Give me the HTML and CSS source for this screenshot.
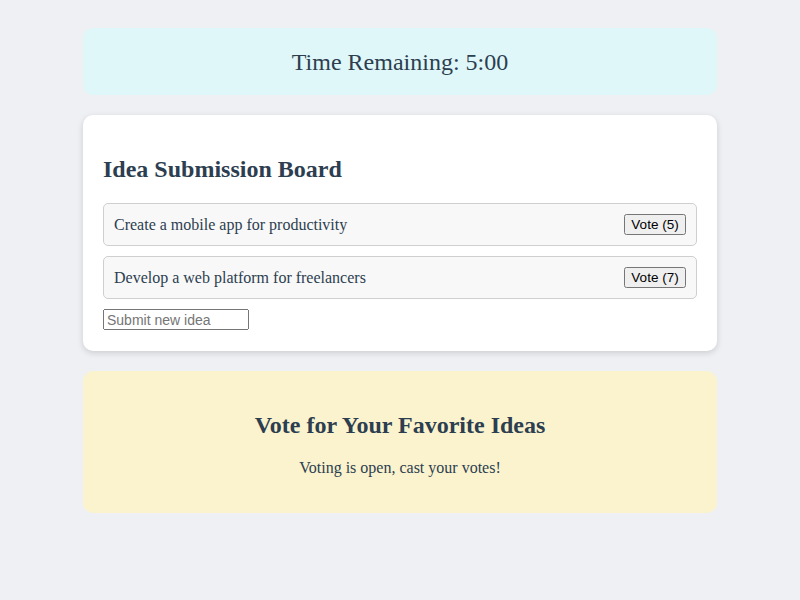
FILE: index.html
```html
<!DOCTYPE html>
<html>
<head>
<meta charset="utf-8">
<link rel="stylesheet" href="styles.css">
</head>
<body>
<div class="container">
  <div class="card timer">Time Remaining: 5:00</div>
  <div class="card board">
    <h2>Idea Submission Board</h2>
    <div class="idea"><span>Create a mobile app for productivity</span><button>Vote (5)</button></div>
    <div class="idea"><span>Develop a web platform for freelancers</span><button>Vote (7)</button></div>
    <input type="text" placeholder="Submit new idea">
  </div>
  <div class="card voting">
    <h2>Vote for Your Favorite Ideas</h2>
    <p>Voting is open, cast your votes!</p>
  </div>
</div>
</body>
</html>
```
FILE: styles.css
```css
html, body {
  margin: 0;
  padding: 0;
}
body {
  background: #eef0f4;
  font-family: "Liberation Serif", "Times New Roman", serif;
  color: #2c3e50;
  padding-top: 28px;
}
.container {
  width: 634px;
  margin: 0 auto;
  display: flex;
  flex-direction: column;
  gap: 20px;
}
.card {
  border-radius: 10px;
  padding: 20px;
}
.timer {
  background: #e0f7f9;
  text-align: center;
  font-size: 24px;
  line-height: 27px;
  padding-top: 21px;
  padding-bottom: 19px;
}
.board {
  background: #ffffff;
  box-shadow: 0 2px 6px rgba(0, 0, 0, 0.15);
  padding-bottom: 21px;
}
h2 {
  font-size: 24px;
  line-height: 28px;
  margin: 20px 0;
}
.idea {
  display: flex;
  justify-content: space-between;
  align-items: center;
  padding: 10px;
  border: 1px solid #cfcfcf;
  border-radius: 5px;
  background: #f8f8f8;
  margin-bottom: 10px;
  font-size: 16px;
  line-height: 21px;
}
.idea button {
  font-family: "Liberation Sans", Arial, sans-serif;
  font-size: 13.5px;
  height: 21px;
  width: 62px;
  padding: 0;
}
input {
  font-family: "Liberation Sans", Arial, sans-serif;
  font-size: 14px;
  display: block;
  box-sizing: border-box;
  width: 146px;
  height: 21px;
  padding: 1px 2px;
}
.voting {
  background: #fbf3cd;
  text-align: center;
}
.voting p {
  font-size: 16px;
  line-height: 18px;
  margin: 0 0 16px;
}
```
